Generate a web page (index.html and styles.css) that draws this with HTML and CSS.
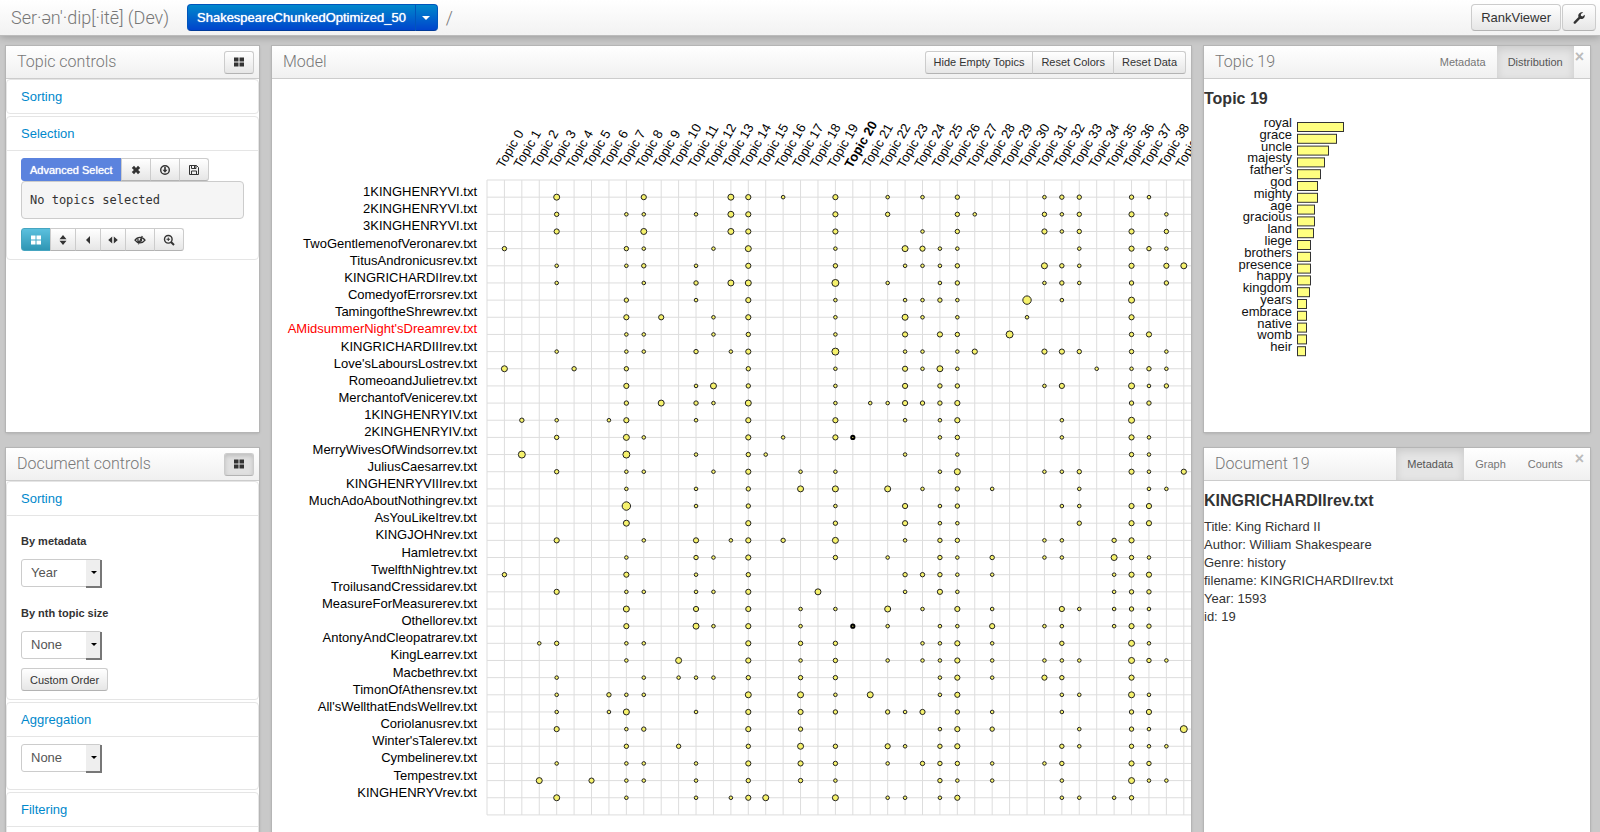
FILE: index.html
```
<!DOCTYPE html>
<html lang="en">
<head>
  <meta charset="UTF-8" />
  <meta name="viewport" content="width=device-width, initial-scale=1.0"/>
  <title>Serendip</title>
  <link rel="stylesheet" href="styles.css">
</head>
<body>
  <svg class="sprite" aria-hidden="true">
    <symbol id="i-large" viewBox="0 0 12 12"><path d="M1 1.5h4.5v4H1zM6.5 1.5H11v4H6.5zM1 6.5h4.5v4H1zM6.5 6.5H11v4H6.5z"/></symbol>
    <symbol id="i-remove" viewBox="0 0 12 12"><path d="M4 1.8 6 3.9l2-2.1L10.200 4 8.100 6l2.100 2L8 10.200 6 8.100 4 10.200 1.800 8l2.100-2-2.100-2z"/></symbol>
    <symbol id="i-down" viewBox="0 0 12 12"><circle cx="6" cy="6" r="4.300" fill="none" stroke="currentColor" stroke-width="1.400"/><path d="M5.200 3h1.600v2.800h1.700L6 8.800 3.500 5.800h1.700z"/></symbol>
    <symbol id="i-save" viewBox="0 0 12 12"><path d="M1.500 1.500h7l2 2v7h-9zM3.500 1.500v3h4.500v-3M3.500 10.500v-3.500h5v3.500" fill="none" stroke="currentColor"/><path d="M6 2h1.200v2H6z"/></symbol>
    <symbol id="i-sort" viewBox="0 0 12 12"><path d="M6 1 9.500 5.200h-7zM2.500 6.800h7L6 11z"/></symbol>
    <symbol id="i-left" viewBox="0 0 12 12"><path d="M8 2v8L4 6z"/></symbol>
    <symbol id="i-both" viewBox="0 0 12 12"><path d="M5.200 2.500v7L1.200 6zM6.800 2.500v7L10.800 6z"/></symbol>
    <symbol id="i-eye" viewBox="0 0 12 12"><path d="M1 6.200C3.500 2.300 8.500 2.300 11 6.200 8.500 9.800 3.500 9.800 1 6.200zM8.300 2 4.300 10.300M4.300 4.800c-.8 1-.5 2.400.6 3.200" fill="none" stroke="currentColor" stroke-width="1.300"/><path d="M7.500 4.200 5.900 8C8 8 8.900 5.600 7.500 4.200z"/></symbol>
    <symbol id="i-zoom" viewBox="0 0 12 12"><path d="M8 8l3 3" stroke="currentColor" stroke-width="2"/><circle cx="5.300" cy="5.300" r="3.800" fill="none" stroke="currentColor" stroke-width="1.400"/><path d="M4.800 3.500h1v1.300h1.300v1H5.800v1.300h-1V5.800H3.500v-1h1.300z"/></symbol>
    <symbol id="i-wrench" viewBox="0 0 14 14"><path d="M12.700 3.700c.6 2.100-1 4.300-3.300 4.300-.5 0-.8 0-1.200-.2l-4.600 4.600c-.5.500-1.200.5-1.700 0s-.5-1.200 0-1.700l4.600-4.600C5.600 3.600 7.400 1.200 9.900 1.200c.5 0 .9.100 1.300.3L8.900 3v1.700l1.500.8z"/></symbol>
  </svg>

  <header class="navbar">
    <span class="brand">Ser·ən&#39;·dip[·itē] (Dev)</span>
    <div class="btn-group">
      <button class="btn-nav btn-primary">ShakespeareChunkedOptimized_50</button>
      <button class="btn-nav btn-primary btn-caret" aria-label="Choose model"><span class="caret"></span></button>
    </div>
    <span class="slash">/</span>
    <div class="nav-right">
      <button class="btn-nav">RankViewer</button>
      <button class="btn-nav btn-wrench" aria-label="Settings"><svg class="icon-lg"><use href="#i-wrench"/></svg></button>
    </div>
  </header>

  <main class="layout">
    <div class="column">
      <section class="panel">
        <div class="panel-head">
          <h2>Topic controls</h2>
          <button class="btn btn-icon" aria-label="Toggle topic controls"><svg class="icon"><use href="#i-large"/></svg></button>
        </div>
        <div class="group">
          <a class="group-title" href="#">Sorting</a>
        </div>
        <div class="group">
          <a class="group-title" href="#">Selection</a>
          <div class="group-body">
            <div class="btn-group">
              <button class="btn btn-select">Advanced Select</button>
              <button class="btn btn-icon" aria-label="Clear selection"><svg class="icon"><use href="#i-remove"/></svg></button>
              <button class="btn btn-icon" aria-label="Load selection"><svg class="icon"><use href="#i-down"/></svg></button>
              <button class="btn btn-icon" aria-label="Save selection"><svg class="icon"><use href="#i-save"/></svg></button>
            </div>
            <pre class="selected">No topics selected</pre>
            <div class="btn-group btn-tools">
              <button class="btn btn-icon btn-info" aria-label="All"><svg class="icon"><use href="#i-large"/></svg></button>
              <button class="btn" aria-label="Sort"><svg class="icon"><use href="#i-sort"/></svg></button>
              <button class="btn" aria-label="Move left"><svg class="icon"><use href="#i-left"/></svg></button>
              <button class="btn" aria-label="Spread"><svg class="icon"><use href="#i-both"/></svg></button>
              <button class="btn btn-icon" aria-label="Hide"><svg class="icon"><use href="#i-eye"/></svg></button>
              <button class="btn btn-icon" aria-label="Zoom"><svg class="icon"><use href="#i-zoom"/></svg></button>
            </div>
          </div>
        </div>
      </section>

      <section class="panel">
        <div class="panel-head">
          <h2>Document controls</h2>
          <button class="btn btn-icon active" aria-label="Toggle document controls"><svg class="icon"><use href="#i-large"/></svg></button>
        </div>
        <div class="group">
          <a class="group-title" href="#">Sorting</a>
          <div class="group-body">
            <label class="field-label" for="metadata">By metadata</label>
            <div class="select">
              <select id="metadata"><option>Year</option></select>
            </div>
            <label class="field-label" for="nthTopic">By nth topic size</label>
            <div class="select">
              <select id="nthTopic"><option>None</option></select>
            </div>
            <button class="btn btn-order">Custom Order</button>
          </div>
        </div>
        <div class="group">
          <a class="group-title" href="#">Aggregation</a>
          <div class="group-body">
            <div class="select">
              <select aria-label="Aggregation"><option>None</option></select>
            </div>
          </div>
        </div>
        <div class="group">
          <a class="group-title" href="#">Filtering</a>
          <div class="group-body"></div>
        </div>
      </section>
    </div>

    <section class="panel panel-model">
      <div class="panel-head">
        <h2>Model</h2>
        <div class="btn-group btn-actions">
          <button class="btn">Hide Empty Topics</button>
          <button class="btn">Reset Colors</button>
          <button class="btn">Reset Data</button>
        </div>
      </div>
      <svg class="matrix" id="matrix"></svg>
    </section>

    <div class="column">
      <section class="panel">
        <div class="panel-head">
          <h2>Topic 19</h2>
          <div class="tabs">
            <button class="tab">Metadata</button>
            <button class="tab active">Distribution</button>
          </div>
          <button class="close" aria-label="Close">×</button>
        </div>
        <h3>Topic 19</h3>
        <svg class="words" id="words"></svg>
      </section>

      <section class="panel">
        <div class="panel-head">
          <h2>Document 19</h2>
          <div class="tabs">
            <button class="tab active">Metadata</button>
            <button class="tab">Graph</button>
            <button class="tab">Counts</button>
          </div>
          <button class="close" aria-label="Close">×</button>
        </div>
        <h3>KINGRICHARDIIrev.txt</h3>
        <div class="meta">
          <div>Title: King Richard II</div>
          <div>Author: William Shakespeare</div>
          <div>Genre: history</div>
          <div>filename: KINGRICHARDIIrev.txt</div>
          <div>Year: 1593</div>
          <div>id: 19</div>
        </div>
      </section>
    </div>
  </main>

  <script src="script.js"></script>
</body>
</html>
```

FILE: styles.css
```
* {
  box-sizing: border-box;
}
body {
  margin: 0;
  height: 100vh;
  overflow: hidden;
  background: #c9c9c9;
  color: #333;
  font: 13px/18px "Liberation Sans", Arial, sans-serif;
}
button, select {
  font: inherit;
  color: inherit;
  margin: 0;
}
.sprite {
  position: absolute;
  width: 0;
  height: 0;
}
.icon {
  flex: none;
  width: 12px;
  height: 12px;
  fill: currentColor;
}
.icon-lg {
  width: 14px;
  height: 14px;
  fill: currentColor;
}

/* top bar */
.navbar {
  display: flex;
  align-items: center;
  height: 36px;
  padding: 0 4px 0 11px;
  background: linear-gradient(#fff, #f2f2f2);
  border-bottom: 1px solid #bbb;
  box-shadow: 0 1px 8px rgba(0, 0, 0, 0.25);
}
.brand {
  width: 176px;
  font: 300 18px/34px Roboto, sans-serif;
  color: #777;
  white-space: nowrap;
}
.slash {
  margin-left: 8px;
  font: 300 18px/34px Roboto, sans-serif;
  color: #777;
}
.btn-nav {
  height: 27px;
  padding: 0 9px;
  border: 1px solid #ccc;
  border-bottom-color: #b3b3b3;
  border-radius: 4px;
  background: linear-gradient(#fff, #e6e6e6);
}
.btn-nav.btn-primary {
  border-color: #0055bb #0055bb #003a99;
  background: linear-gradient(#0088cc, #0044cc);
  color: #fff;
  text-shadow: 0 0 1px #fff;
}
.btn-nav.btn-caret {
  width: 23px;
  padding: 0;
}
.caret {
  display: inline-block;
  vertical-align: middle;
  border: 4px solid transparent;
  border-top-color: #fff;
  border-bottom: 0;
}
.nav-right {
  display: flex;
  gap: 1px;
  margin-left: auto;
}
.btn-wrench {
  display: flex;
  align-items: center;
}

/* panels */
.layout {
  display: grid;
  grid-template-columns: 253px minmax(0, 1fr) 386px;
  gap: 13px;
  padding: 10px 10px 0 6px;
}
.column {
  display: flex;
  flex-direction: column;
  gap: 16px;
}
.panel {
  height: calc(50vh - 30px);
  overflow: hidden;
  background: #fff;
  box-shadow: 0 0 0 1px #b5b5b5, 0 1px 3px rgba(0, 0, 0, 0.2);
}
.panel-model {
  height: auto;
}
.panel-head {
  display: flex;
  align-items: center;
  height: 33px;
  padding: 0 5px 0 11px;
  background: linear-gradient(#fff, #f0f0f0);
  border-bottom: 1px solid #ccc;
}
.panel-head h2 {
  flex: 1;
  margin: 0;
  font: 300 16px/32px Roboto, sans-serif;
  color: #777;
}
.panel h3 {
  margin: 11px 0 8px;
  font-size: 16px;
  line-height: 18px;
}

/* small buttons */
.btn {
  display: flex;
  align-items: center;
  justify-content: center;
  height: 23px;
  padding: 0 8px;
  border: 1px solid #ccc;
  border-bottom-color: #b3b3b3;
  border-radius: 3px;
  background: linear-gradient(#fff, #e6e6e6);
  font-size: 11px;
}
.btn.active {
  background: #e0e0e0;
  box-shadow: inset 0 2px 4px rgba(0, 0, 0, 0.15);
}
.btn-group {
  display: flex;
}
.btn-group button:not(:first-child) {
  margin-left: -1px;
  border-top-left-radius: 0;
  border-bottom-left-radius: 0;
}
.btn-group button:not(:last-child) {
  border-top-right-radius: 0;
  border-bottom-right-radius: 0;
}
.btn-group .btn-select {
  background: #5b83de;
  border-color: #5b83de;
  color: #fff;
  text-shadow: 0 0 1px #fff;
}
.btn-tools .btn {
  width: 26px;
  padding: 0;
}
.btn.btn-icon {
  width: 30px;
  padding: 0;
}
.btn-tools .btn-info {
  background: linear-gradient(#5bc0de, #2f96b4);
  border-color: #46a5c0;
  color: #fff;
}

/* accordion */
.group {
  margin-bottom: 2px;
  border: 1px solid #e5e5e5;
  border-radius: 4px;
}
.group-title {
  display: block;
  padding: 8px 14px 7px;
  color: #0088cc;
  text-decoration: none;
}
.group-body {
  padding: 7px 14px 8px;
  border-top: 1px solid #e5e5e5;
}
.selected {
  margin: 0 0 9px;
  padding: 9px 8px;
  background: #f5f5f5;
  border: 1px solid #ccc;
  border-radius: 4px;
  font: 12px/18px "DejaVu Sans Mono", monospace;
}
.field-label {
  display: block;
  margin: 9px 0;
  font-size: 11px;
  font-weight: bold;
}
.select + .field-label {
  margin-top: 17px;
}
.select {
  position: relative;
  width: 81px;
  margin-bottom: 9px;
}
.select select {
  display: block;
  width: 100%;
  height: 28px;
  padding: 0 9px;
  appearance: none;
  border: 1px solid #ccc;
  border-radius: 3px;
  background: #fff;
  color: #555;
}
.select::before {
  content: "";
  position: absolute;
  top: 1px;
  right: 0;
  width: 14px;
  height: 26px;
  background: #eee;
  border: solid #777;
  border-width: 0 2px 2px 0;
  pointer-events: none;
}
.select::after {
  content: "";
  position: absolute;
  top: 12px;
  right: 5px;
  border: 3px solid transparent;
  border-top-color: #000;
  border-bottom: 0;
  pointer-events: none;
}

/* tabs */
.tabs {
  display: flex;
  align-self: stretch;
}
.tab {
  padding: 0 11px;
  border: 0;
  background: none;
  color: #777;
  font-size: 11px;
}
.tab.active {
  background: #e5e5e5;
  box-shadow: inset 0 3px 8px rgba(0, 0, 0, 0.12);
  color: #555;
}
.close {
  align-self: flex-start;
  padding: 2px 1px;
  border: 0;
  background: none;
  color: #bbb;
  font-size: 16px;
  font-weight: bold;
}

/* charts */
.matrix {
  display: block;
  width: 100%;
  height: 752px;
}
.matrix line {
  stroke: #ddd;
}
.matrix text {
  font-size: 13px;
  fill: #000;
}
.matrix .row-label {
  text-anchor: end;
}
.matrix .hover {
  fill: red;
}
.matrix .current {
  font-weight: bold;
}
.matrix circle {
  fill: #f5f16c;
  stroke: #222;
}
.matrix .marked {
  stroke: #000;
  stroke-width: 2px;
}
.words {
  display: block;
  width: 100%;
  height: 250px;
}
.words text {
  text-anchor: end;
  fill: #111;
}
.words rect {
  fill: #ffff80;
  stroke: #333;
}
```

FILE: script.js
```
const NS = 'http://www.w3.org/2000/svg';

// one entry per document: name, then "topic:size" pairs (k = marked dot)
const docs = [
  ['1KINGHENRYVI.txt', '3:4 8:3 13:4 14:3 16:1 19:3 22:1 24:1 26:2 31:1 32:2 33:2 36:2 37:1'],
  ['2KINGHENRYVI.txt', '3:2 7:1 8:1 11:1 13:4 14:3 19:3 22:2 26:2 27:1 31:2 32:1 33:2 36:3 38:1'],
  ['3KINGHENRYVI.txt', '3:3 8:4 13:4 14:3 19:3 24:1 26:2 31:3 32:1 33:2 36:3 38:2'],
  ['TwoGentlemenofVeronarev.txt', '0:2 7:2 8:1 12:1 14:4 19:1 23:4 24:3 25:1 26:1 33:1 36:3 37:2 38:1'],
  ['TitusAndronicusrev.txt', '3:1 7:1 8:2 11:1 14:3 19:2 23:1 24:1 25:1 26:2 31:4 32:2 33:1 36:3 38:3 39:4'],
  ['KINGRICHARDIIrev.txt', '3:1 8:1 11:2 13:4 14:4 19:5 22:1 25:1 26:2 31:1 32:2 33:1 36:2 38:2'],
  ['ComedyofErrorsrev.txt', '7:2 11:1 14:3 19:1 23:1 24:1 25:2 26:1 30:6 32:1 36:4'],
  ['TamingoftheShrewrev.txt', '7:3 9:3 12:1 14:3 19:1 23:4 24:1 26:1 30:1 36:3'],
  ["AMidsummerNight'sDreamrev.txt", '7:1 8:1 12:1 14:2 19:1 23:3 25:3 26:2 29:5 36:2 37:3'],
  ['KINGRICHARDIIIrev.txt', '3:1 7:1 8:1 11:2 13:1 14:3 19:5 23:1 24:1 26:1 27:3 31:3 32:3 33:2 36:2 38:1'],
  ["Love'sLaboursLostrev.txt", '0:4 4:2 7:2 14:2 19:1 23:3 24:1 25:4 26:1 34:1 36:1 37:2 38:1'],
  ['RomeoandJulietrev.txt', '7:3 11:1 12:4 14:2 19:1 23:3 25:2 26:2 31:1 32:3 36:4 37:1 38:2'],
  ['MerchantofVenicerev.txt', '7:2 9:4 11:2 12:1 14:4 19:1 21:1 22:1 23:3 24:2 25:2 26:3 36:2 37:2'],
  ['1KINGHENRYIV.txt', '1:2 3:1 6:1 7:3 11:1 14:3 19:3 23:1 25:1 26:3 32:1 36:4'],
  ['2KINGHENRYIV.txt', '3:2 7:4 8:1 14:3 16:1 19:3 20:k 25:1 26:2 32:1 36:3 37:1'],
  ['MerryWivesOfWindsorrev.txt', '1:5 7:5 11:1 14:2 15:1 23:1 26:1 36:2 37:1'],
  ['JuliusCaesarrev.txt', '3:2 7:1 8:1 12:1 14:3 17:1 19:1 25:1 26:4 31:1 32:1 33:2 36:3 37:1 39:3'],
  ['KINGHENRYVIIIrev.txt', '7:1 11:1 14:2 17:4 19:4 22:4 24:1 26:2 28:1 33:1 37:1 38:1'],
  ['MuchAdoAboutNothingrev.txt', '7:6 11:1 14:2 19:1 23:3 25:1 26:2 32:1 33:1 36:3 37:3'],
  ['AsYouLikeItrev.txt', '7:4 14:3 19:2 23:3 25:1 26:1 33:2 36:3 37:3'],
  ['KINGJOHNrev.txt', '3:3 8:1 11:3 13:1 14:3 16:2 19:4 23:1 25:2 26:2 31:1 32:1 35:2 36:3'],
  ['Hamletrev.txt', '7:1 11:2 12:1 14:3 19:2 22:1 25:2 26:1 28:2 31:1 32:1 35:4 36:2 37:1'],
  ['TwelfthNightrev.txt', '0:2 7:3 11:1 14:2 23:2 24:2 25:2 26:1 28:1 35:1 36:3 37:3'],
  ['TroilusandCressidarev.txt', '3:3 7:1 8:1 11:1 12:1 14:3 18:4 23:1 25:3 26:1 35:1 36:2 37:2'],
  ['MeasureForMeasurerev.txt', '7:4 11:3 14:3 17:1 19:1 22:4 24:1 26:3 28:1 32:3 33:1 35:1 36:2 37:1'],
  ['Othellorev.txt', '7:3 11:4 12:1 14:3 17:1 20:k 22:1 25:1 26:1 28:3 31:1 32:1 35:1 36:3 37:2'],
  ['AntonyAndCleopatrarev.txt', '2:1 3:2 7:1 8:1 14:3 17:2 19:2 24:1 25:1 26:3 28:1 32:2 36:4 37:1'],
  ['KingLearrev.txt', '7:1 10:4 14:3 17:1 19:2 22:1 24:1 25:1 26:3 28:1 31:1 32:1 33:1 36:4 37:2 38:1'],
  ['Macbethrev.txt', '3:1 8:1 10:1 11:1 12:1 14:2 17:2 19:2 25:1 26:3 28:1 31:3 32:2 36:3'],
  ['TimonOfAthensrev.txt', '3:1 6:2 7:1 8:1 14:4 17:4 19:1 21:4 25:1 26:3 32:1 33:1 36:4 37:1'],
  ["All'sWellthatEndsWellrev.txt", '3:1 6:1 7:4 11:1 14:3 17:3 19:2 22:2 23:1 24:3 26:2 28:1 32:1 36:2 37:3'],
  ['Coriolanusrev.txt', '3:3 7:1 8:2 14:3 17:2 25:1 26:3 28:2 33:1 36:2 37:1 39:5'],
  ["Winter'sTalerev.txt", '7:2 10:2 14:2 17:4 19:2 22:3 23:1 25:2 26:3 32:2 33:1 36:2 37:1 38:1'],
  ['Cymbelinerev.txt', '3:1 7:1 8:1 11:1 14:3 17:3 19:2 22:1 24:2 25:2 26:2 28:1 31:1 32:2 36:3 37:2'],
  ['Tempestrev.txt', '2:4 5:3 7:1 8:1 11:1 14:2 17:2 19:1 25:2 26:1 28:1 32:1 36:4 37:1 38:1'],
  ['KINGHENRYVrev.txt', '3:4 7:1 11:1 13:1 14:3 15:4 19:4 22:1 23:1 25:1 26:3 32:1 33:1 35:1 36:2']
];
const radius = { 1: 1.8, 2: 2.2, 3: 2.6, 4: 3, 5: 3.5, 6: 4.2, k: 1.6 };

const words = [
  ['royal', 46], ['grace', 39], ['uncle', 31], ['majesty', 27], ['father\'s', 23],
  ['god', 20], ['mighty', 20], ['age', 17], ['gracious', 17], ['land', 16],
  ['liege', 13], ['brothers', 13], ['presence', 13], ['happy', 13], ['kingdom', 12],
  ['years', 9], ['embrace', 9], ['native', 9], ['womb', 9], ['heir', 8]
];

function add(parent, name, attrs, text) {
  const el = document.createElementNS(NS, name);
  for (const key in attrs) el.setAttribute(key, attrs[key]);
  if (text) el.textContent = text;
  parent.appendChild(el);
}

function drawMatrix() {
  const svg = document.getElementById('matrix');
  const topics = 40;
  const left = 215, top = 101;
  const colStep = 17.42, rowStep = 17.16;
  const right = left + colStep * (topics + 1);
  const bottom = top + rowStep * (docs.length + 1);

  for (let i = 0; i <= topics; i++) {
    const x = left + colStep * i;
    add(svg, 'line', { x1: x, y1: top, x2: x, y2: bottom });
  }
  for (let i = 0; i <= docs.length + 1; i++) {
    const y = top + rowStep * i;
    add(svg, 'line', { x1: left, y1: y, x2: right, y2: y });
  }

  for (let i = 0; i < topics; i++) {
    const x = left + colStep * (i + 1) - 1;
    const cls = i === 20 ? 'col-label current' : 'col-label';
    add(svg, 'text', { class: cls, transform: `translate(${x},${top - 11}) rotate(-60)` }, 'Topic ' + i);
  }

  docs.forEach(([name, dots], row) => {
    const y = top + rowStep * (row + 1);
    const cls = row === 8 ? 'row-label hover' : 'row-label';
    add(svg, 'text', { class: cls, x: left - 10, y: y - 1 }, name);
    dots.split(' ').forEach(dot => {
      const [col, size] = dot.split(':');
      const attrs = { cx: left + colStep * (Number(col) + 1), cy: y, r: radius[size] };
      if (size === 'k') attrs.class = 'marked';
      add(svg, 'circle', attrs);
    });
  });
}

function drawWords() {
  const svg = document.getElementById('words');
  const step = 11.8;
  words.forEach(([word, width], i) => {
    add(svg, 'text', { x: 88, y: 11 + step * i }, word);
    add(svg, 'rect', { x: 93.5, y: 6.5 + step * i, width: width, height: 9 });
  });
}

drawMatrix();
drawWords();
```
